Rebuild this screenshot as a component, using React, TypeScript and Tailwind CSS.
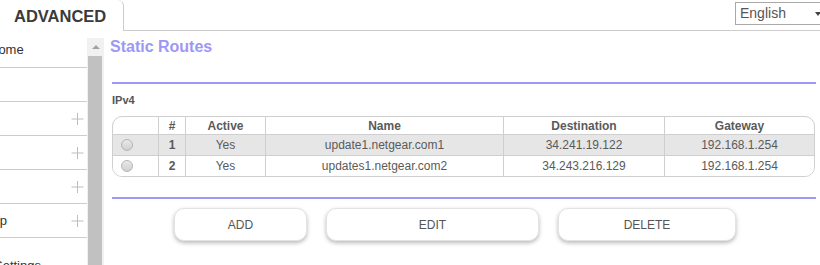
import React from "react";

type Route = {
  id: number;
  active: string;
  name: string;
  destination: string;
  gateway: string;
};

const routes: Route[] = [
  { id: 1, active: "Yes", name: "update1.netgear.com1", destination: "34.241.19.122", gateway: "192.168.1.254" },
  { id: 2, active: "Yes", name: "updates1.netgear.com2", destination: "34.243.216.129", gateway: "192.168.1.254" },
];

const menu = [
  { label: "Home", shift: "-ml-[11px]", plus: false },
  { label: "", shift: "", plus: false },
  { label: "", shift: "", plus: true },
  { label: "", shift: "", plus: true },
  { label: "", shift: "", plus: true },
  { label: "Setup", shift: "-ml-[27px]", plus: true },
];

const cols = "grid grid-cols-[46px_27px_80px_238px_161px_1fr]";

const Plus = () => (
  <svg width="13" height="13" viewBox="0 0 13 13" className="absolute right-[3px] top-1/2 -translate-y-1/2">
    <path d="M6.5 0.5v12M0.5 6.5h12" stroke="#bdbdbd" strokeWidth="1" />
  </svg>
);

const Radio = () => (
  <span className="block w-[12px] h-[12px] rounded-full border border-[#b5b5b5] bg-gradient-to-b from-[#e9e9e9] to-[#cfcfcf]" />
);

export default function App() {
  return (
    <div className="w-[820px] h-[265px] overflow-hidden bg-white font-['Liberation_Sans',Arial,sans-serif] text-[#5a5a5a]">
      {/* top tab bar */}
      <div className="flex h-[31px]">
        <div className="w-[124px] h-full border-r border-[#ccc] rounded-tr-[6px] pl-[14px] pt-[5px]">
          <span className="text-[16.5px] leading-[18px] font-bold text-[#3a3a3a]">ADVANCED</span>
        </div>
        <div className="flex-1 border-b border-[#ccc] flex justify-end pt-[2px]">
          <div className="relative w-[86px] h-[23px] -mr-[1px] border border-[#a9a9a9] bg-white pl-[4px] text-[14px] leading-[20px] text-[#555]">
            English
            <span className="absolute right-[-1px] top-[9px] w-0 h-0 border-l-[3px] border-r-[3px] border-t-[4px] border-l-transparent border-r-transparent border-t-[#444]" />
          </div>
        </div>
      </div>

      <div className="flex">
        {/* side menu */}
        <div className="w-[87px] shrink-0 overflow-hidden text-[13px] text-[#333]">
          {menu.map((m, i) => (
            <div
              key={i}
              className={`relative flex items-center border-b border-[#ccc] ${i === 0 ? "h-[37px] pt-[2px]" : "h-[34px]"}`}
            >
              {m.label && <span className={`whitespace-nowrap ${m.shift}`}>{m.label}</span>}
              {m.plus && <Plus />}
            </div>
          ))}
          <div className="pt-[18px] -ml-[6px] whitespace-nowrap">Settings</div>
        </div>

        {/* scrollbar */}
        <div className="w-[17px] shrink-0 mt-[7px] h-[240px] bg-[#f1f1f1] flex flex-col">
          <div className="h-[18px] flex items-center justify-center">
            <span className="w-0 h-0 border-l-[4px] border-r-[4px] border-b-[4px] border-l-transparent border-r-transparent border-b-[#a3a3a3]" />
          </div>
          <div className="flex-1 ml-[1px] mr-[2px] bg-[#c1c1c1]" />
        </div>

        {/* content */}
        <div className="flex-1 pl-[6px]">
          <h1 className="mt-[7px] text-[16px] leading-[18px] font-bold text-[#9d98f6]">Static Routes</h1>
          <div className="ml-[2px] w-[704px]">
            <div className="mt-[26px] h-[2px] bg-[#9d99f4]" />
            <div className="mt-[10px] text-[11px] leading-[13px] font-bold text-[#555]">IPv4</div>

            <div className="mt-[9px] border border-[#cfcfcf] rounded-[10px] overflow-hidden text-[12px] w-[703px]">
              <div className={`${cols} h-[18px] border-b border-[#cfcfcf] font-bold items-stretch`}>
                <div className="border-r border-[#cfcfcf]" />
                <div className="border-r border-[#cfcfcf] flex items-center justify-center">#</div>
                <div className="border-r border-[#cfcfcf] flex items-center justify-center">Active</div>
                <div className="border-r border-[#cfcfcf] flex items-center justify-center">Name</div>
                <div className="border-r border-[#cfcfcf] flex items-center justify-center">Destination</div>
                <div className="flex items-center justify-center">Gateway</div>
              </div>
              {routes.map((r, i) => (
                <div
                  key={r.id}
                  className={`${cols} ${i === 0 ? "h-[21px] bg-[#e6e6e6] border-b border-[#cfcfcf]" : "h-[20px] bg-white"}`}
                >
                  <div className="border-r border-[#cfcfcf] flex items-center pl-[8px]">
                    <Radio />
                  </div>
                  <div className="border-r border-[#cfcfcf] flex items-center justify-center font-bold">{r.id}</div>
                  <div className="border-r border-[#cfcfcf] flex items-center justify-center">{r.active}</div>
                  <div className="border-r border-[#cfcfcf] flex items-center justify-center">{r.name}</div>
                  <div className="border-r border-[#cfcfcf] flex items-center justify-center">{r.destination}</div>
                  <div className="flex items-center justify-center">{r.gateway}</div>
                </div>
              ))}
            </div>

            <div className="mt-[20px] h-[2px] bg-[#9d99f4]" />

            <div className="mt-[9px] flex gap-[19px] pl-[62px] text-[12px] text-[#555]">
              <button className="w-[133px] h-[33px] rounded-[10px] border border-[#e3e3e3] bg-white shadow-[0_2px_4px_rgba(0,0,0,0.28)]">ADD</button>
              <button className="w-[213px] h-[33px] rounded-[10px] border border-[#e3e3e3] bg-white shadow-[0_2px_4px_rgba(0,0,0,0.28)]">EDIT</button>
              <button className="w-[178px] h-[33px] rounded-[10px] border border-[#e3e3e3] bg-white shadow-[0_2px_4px_rgba(0,0,0,0.28)]">DELETE</button>
            </div>
          </div>
        </div>
      </div>
    </div>
  );
}
